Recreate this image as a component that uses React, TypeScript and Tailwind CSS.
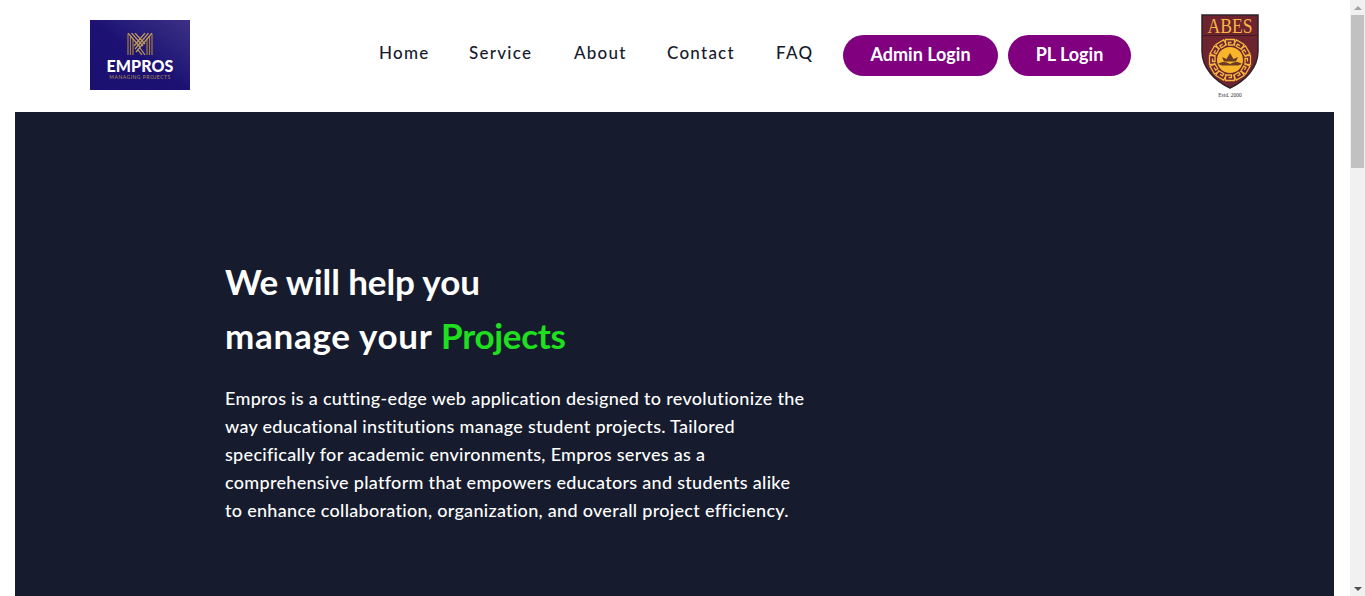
import React from "react";

const navLinks = [
  { label: "Home", width: "w-[49px]" },
  { label: "Service", width: "w-[64px]" },
  { label: "About", width: "w-[52px]" },
  { label: "Contact", width: "w-[68px]" },
  { label: "FAQ", width: "w-[36px]" },
];

const keyAngles = [0, 30, 60, 90, 120, 150, 180, 210, 240, 270, 300, 330];

function EmprosLogo() {
  return (
    <div className="w-[100px] h-[70px] bg-gradient-to-tr from-[#1a1070] via-[#1d1274] to-[#3d3085] flex flex-col items-center pt-[13px]">
      <svg width="26" height="22" viewBox="0 0 26 22" fill="none" stroke="#c29c58" strokeWidth="1.200">
        <path d="M1 22V1M3.500 22V3M6 22V6M25 22V1M22.500 22V3M20 22V6" stroke="#a07c40" />
        <path d="M1 0L13 14M4.500 0L16 13M8 0L18 11M25 0L9 19M21.500 0L8 16M18 0L7 13M13 15L18 22M11 17L15 22" />
      </svg>
      <span className="font-['Lato',sans-serif] font-black text-[16px] leading-[14px] tracking-[0.1px] text-white mt-[4px]">EMPROS</span>
      <span className="font-['Lato',sans-serif] text-[5px] leading-[6px] tracking-[0.5px] text-[#b08d50] mt-[1px]">MANAGING PROJECTS</span>
    </div>
  );
}

function AbesLogo() {
  return (
    <div className="flex flex-col items-center w-[58px]">
      <svg className="overflow-visible" width="58" height="75" viewBox="0 0 58 75">
        <path d="M1 1H57V37C57 54 44 67 29 74C14 67 1 54 1 37Z" fill="#6e2430" stroke="#2e2326" strokeWidth="1.500" />
        <path d="M1.500 21.500H56.500" stroke="#3f1820" strokeWidth="1" />
        <text x="29" y="18.500" textAnchor="middle" fontFamily="Liberation Serif" fontSize="22" textLength="45" lengthAdjust="spacingAndGlyphs" fill="#f4b63f">ABES</text>
        <g fill="none" stroke="#f4b63f" strokeWidth="1.300">
          {keyAngles.map((angle) => (
            <path key={angle} transform={`rotate(${angle} 29 46)`} d="M24.500 31V25.500H33.500V31H27.500V28.500H30.500" />
          ))}
        </g>
        <circle cx="29" cy="46" r="13" fill="#f7b52b" />
        <path d="M17 50C22 47 25 48 29 50C33 48 36 47 41 50L37 51.500H21Z" fill="#6b3a25" />
        <path d="M23 47.500L21 43L25.500 45L29 39L32.500 45L37 43L35 47.500Z" fill="#6b3a25" />
      </svg>
      <span className="font-['Liberation_Serif',serif] text-[5.500px] leading-[6px] text-[#333] mt-[3px] whitespace-nowrap">Estd. 2000</span>
    </div>
  );
}

function Scrollbar() {
  return (
    <div className="w-[15px] shrink-0 h-full bg-[#f1f1f1] flex flex-col items-center">
      <div className="h-[15px] flex items-center justify-center">
        <div className="w-0 h-0 border-x-[4px] border-x-transparent border-b-[4px] border-b-[#a3a3a3]" />
      </div>
      <div className="w-[13px] h-[153px] bg-[#c1c1c1]" />
      <div className="flex-1" />
      <div className="h-[15px] flex items-center justify-center">
        <div className="w-0 h-0 border-x-[4px] border-x-transparent border-t-[4px] border-t-[#505050]" />
      </div>
    </div>
  );
}

export default function App() {
  return (
    <div className="h-[596px] overflow-hidden flex bg-white font-['Lato',sans-serif]">
      <div className="flex-1 min-w-0">
        <header className="h-[112px] flex pl-[90px]">
          <div className="pt-[20px] w-[289px]">
            <EmprosLogo />
          </div>
          <nav className="flex gap-[41px] pt-[42px] h-fit">
            {navLinks.map((link) => (
              <a key={link.label} href="#" className={`${link.width} text-[17px] leading-[22px] font-medium tracking-[1.25px] text-[#161c2d] whitespace-nowrap`}>
                {link.label}
              </a>
            ))}
          </nav>
          <div className="flex gap-[10px] pt-[35px] ml-[31px] h-fit">
            <button className="w-[155px] h-[41px] pb-[3px] rounded-full bg-[#800080] text-white text-[18px] font-bold">Admin Login</button>
            <button className="w-[123px] h-[41px] pb-[3px] rounded-full bg-[#800080] text-white text-[18px] font-bold">PL Login</button>
          </div>
          <div className="pt-[14px] ml-[70px]">
            <AbesLogo />
          </div>
        </header>
        <main className="ml-[15px] mr-[16px] bg-[#161c2d] h-[484px] pl-[210px] pt-[142px]">
          <h1 className="text-[35px] leading-[54px] font-bold text-white">
            <span className="tracking-[-0.1px]">We will help you</span>
            <br />
            <span className="tracking-[0.7px]">manage your </span>
            <span className="tracking-[-0.3px] text-[#1ee01e]">Projects</span>
          </h1>
          <p className="mt-[22px] w-[584px] text-[18px] leading-[28px] font-medium tracking-[0.3px] text-white">
            Empros is a cutting-edge web application designed to revolutionize the way educational institutions manage student projects. Tailored specifically for academic environments, Empros serves as a comprehensive platform that empowers educators and students alike to enhance collaboration, organization, and overall project efficiency.
          </p>
        </main>
      </div>
      <Scrollbar />
    </div>
  );
}
